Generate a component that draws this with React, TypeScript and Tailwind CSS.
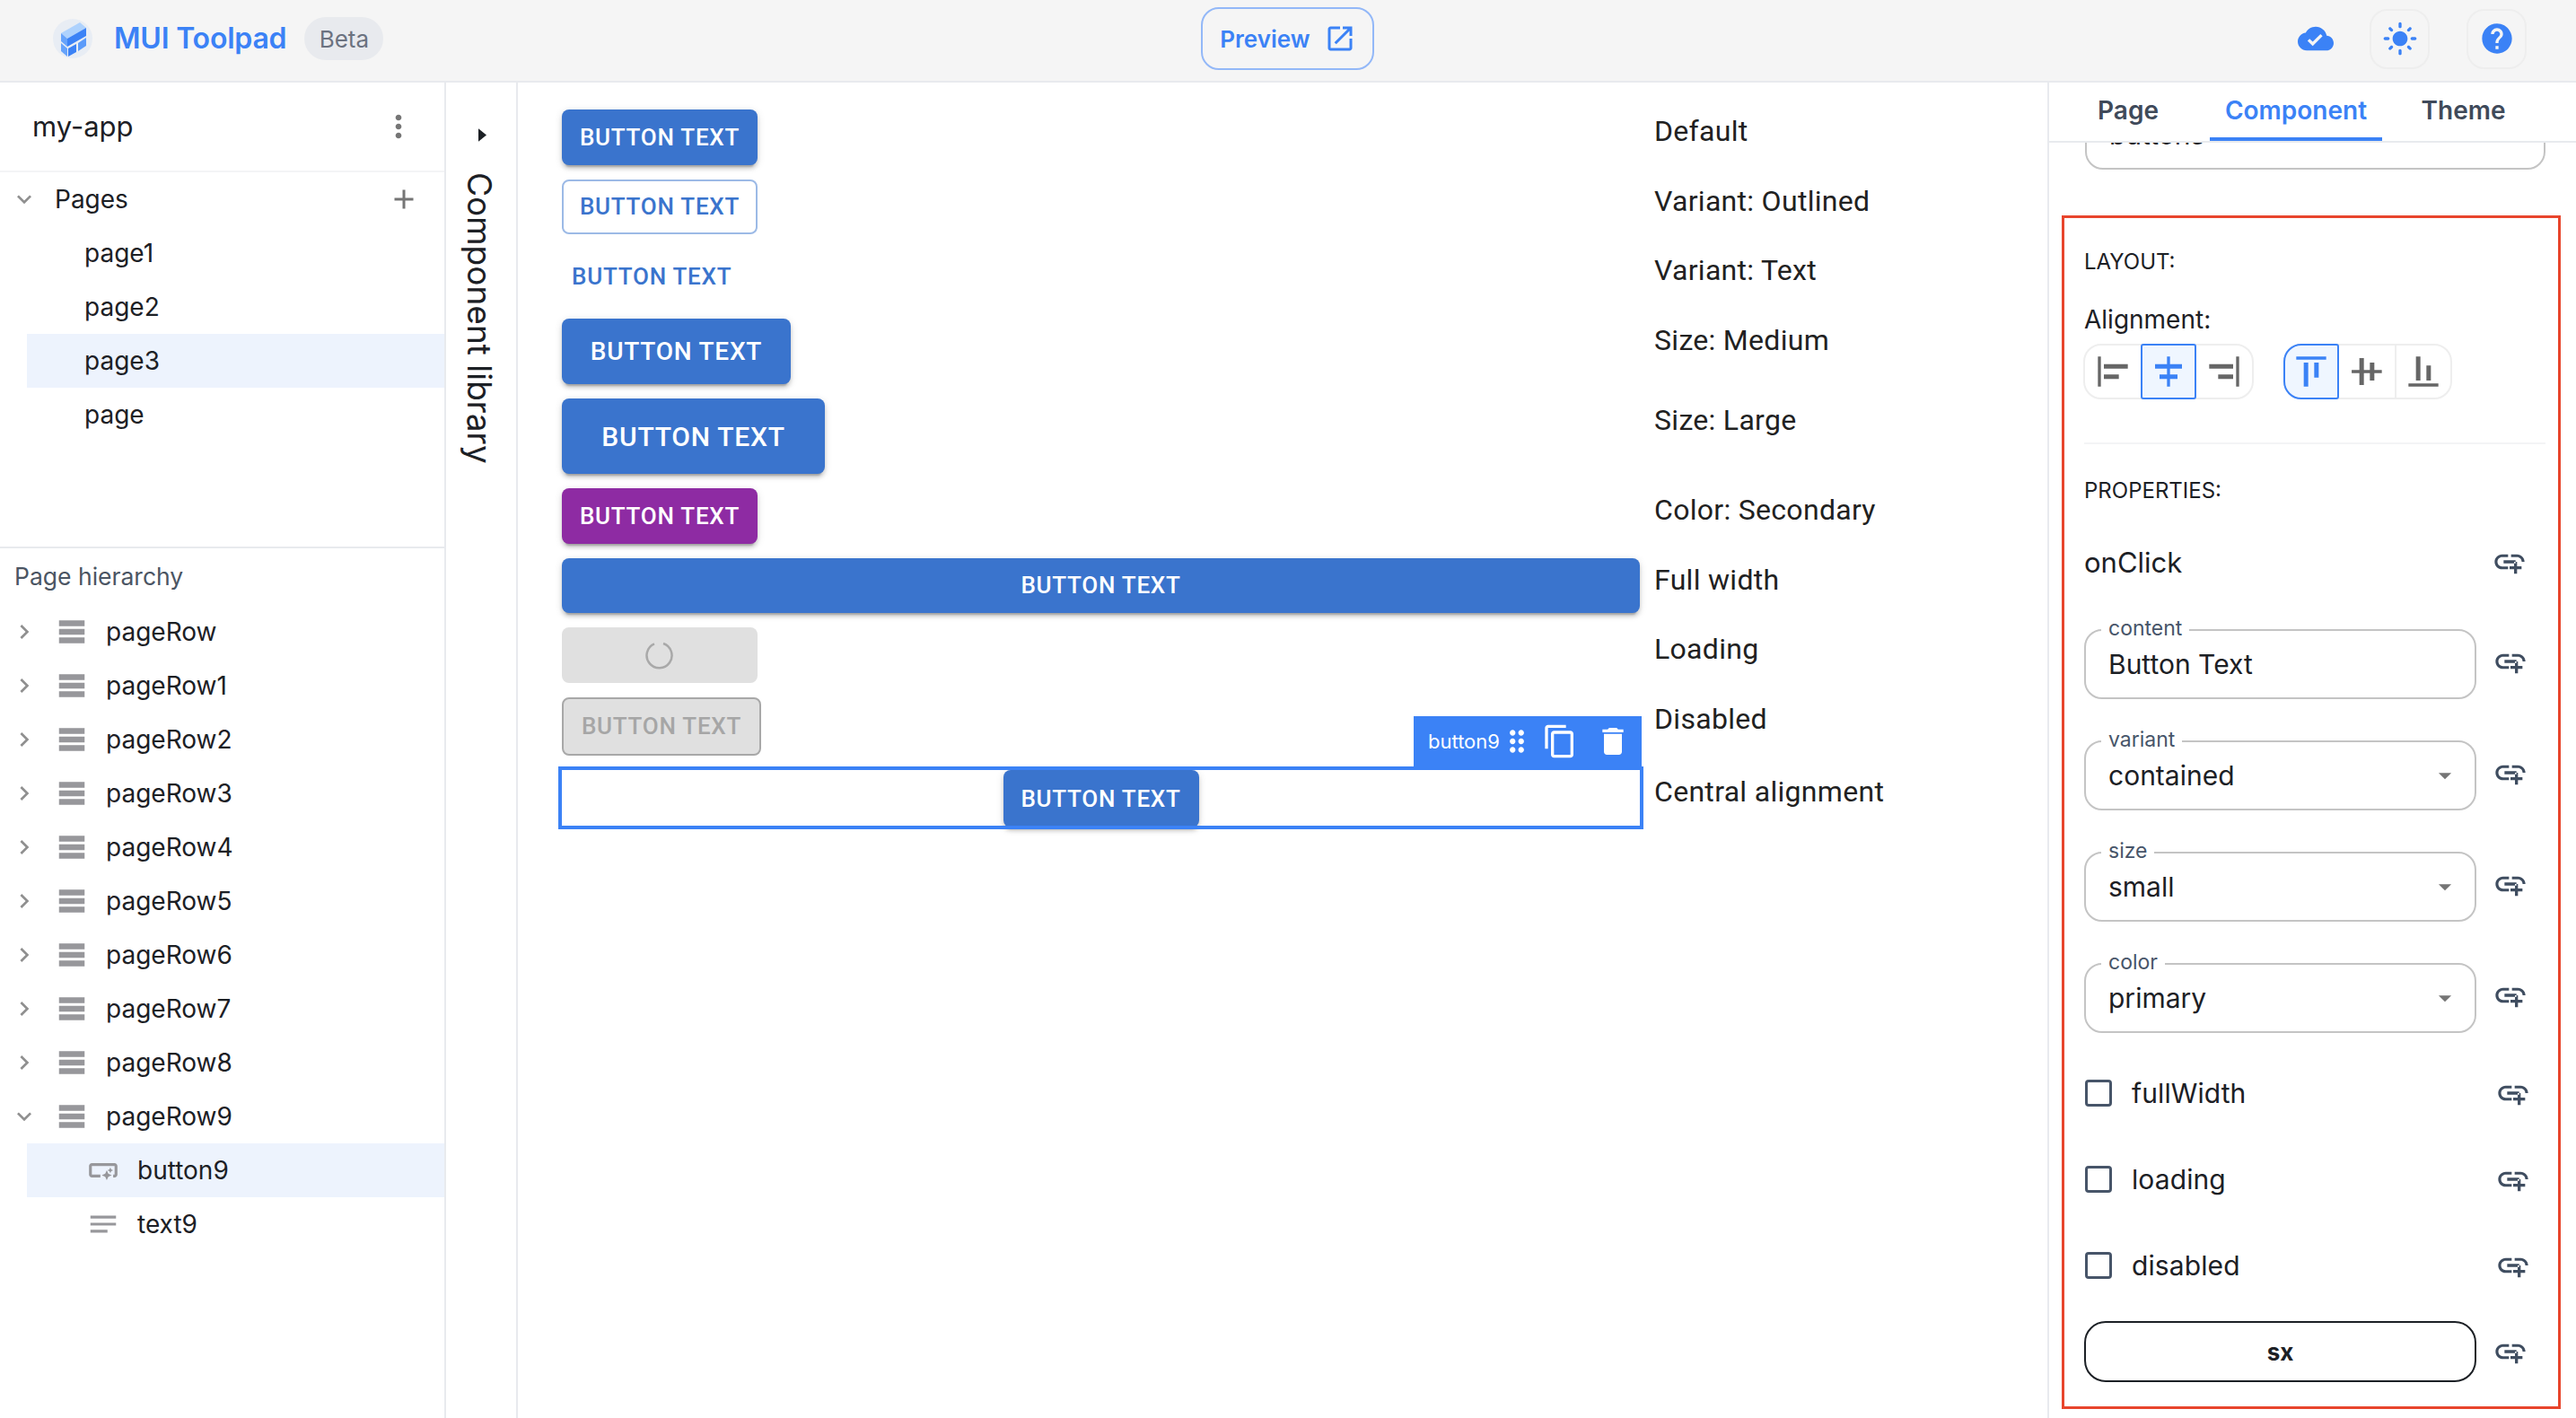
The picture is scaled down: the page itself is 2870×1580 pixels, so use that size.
import React from 'react';

const P = {
  copy: 'M16 1H4c-1.1 0-2 .9-2 2v14h2V3h12V1zm3 4H8c-1.1 0-2 .9-2 2v14c0 1.1.9 2 2 2h11c1.1 0 2-.9 2-2V7c0-1.1-.9-2-2-2zm0 16H8V7h11v14z',
  trash: 'M6 19c0 1.1.9 2 2 2h8c1.1 0 2-.9 2-2V7H6v12zM19 4h-3.5l-1-1h-5l-1 1H5v2h14V4z',
  drag: 'M11 18c0 1.1-.9 2-2 2s-2-.9-2-2 .9-2 2-2 2 .9 2 2zm-2-8c-1.1 0-2 .9-2 2s.9 2 2 2 2-.9 2-2-.9-2-2-2zm0-6c-1.1 0-2 .9-2 2s.9 2 2 2 2-.9 2-2-.9-2-2-2zm6 4c1.1 0 2-.9 2-2s-.9-2-2-2-2 .9-2 2 .9 2 2 2zm0 2c-1.1 0-2 .9-2 2s.9 2 2 2 2-.9 2-2-.9-2-2-2zm0 6c-1.1 0-2 .9-2 2s.9 2 2 2 2-.9 2-2-.9-2-2-2z',
  cloud: 'M19.35 10.04C18.67 6.59 15.64 4 12 4 9.11 4 6.6 5.64 5.35 8.04 2.34 8.36 0 10.91 0 14c0 3.31 2.69 6 6 6h13c2.76 0 5-2.24 5-5 0-2.64-2.05-4.78-4.65-4.96zM10 17l-3.5-3.5 1.41-1.41L10 14.17 15.18 9l1.41 1.41L10 17z',
  sun: 'M12 7c-2.76 0-5 2.24-5 5s2.24 5 5 5 5-2.24 5-5-2.24-5-5-5zM2 13h2c.55 0 1-.45 1-1s-.45-1-1-1H2c-.55 0-1 .45-1 1s.45 1 1 1zm18 0h2c.55 0 1-.45 1-1s-.45-1-1-1h-2c-.55 0-1 .45-1 1s.45 1 1 1zM11 2v2c0 .55.45 1 1 1s1-.45 1-1V2c0-.55-.45-1-1-1s-1 .45-1 1zm0 18v2c0 .55.45 1 1 1s1-.45 1-1v-2c0-.55-.45-1-1-1s-1 .45-1 1zM5.99 4.58c-.39-.39-1.03-.39-1.41 0-.39.39-.39 1.03 0 1.41l1.06 1.06c.39.39 1.03.39 1.41 0s.39-1.03 0-1.41L5.99 4.58zm12.37 12.37c-.39-.39-1.03-.39-1.41 0-.39.39-.39 1.03 0 1.41l1.06 1.06c.39.39 1.03.39 1.41 0 .39-.39.39-1.03 0-1.41l-1.06-1.06zm1.06-10.96c.39-.39.39-1.03 0-1.41-.39-.39-1.03-.39-1.41 0l-1.06 1.06c-.39.39-.39 1.03 0 1.41s1.03.39 1.41 0l1.06-1.06zM7.05 18.36c.39-.39.39-1.03 0-1.41-.39-.39-1.03-.39-1.41 0l-1.06 1.06c-.39.39-.39 1.03 0 1.41s1.03.39 1.41 0l1.06-1.06z',
  help: 'M12 2C6.48 2 2 6.48 2 12s4.48 10 10 10 10-4.48 10-10S17.52 2 12 2zm1 17h-2v-2h2v2zm2.07-7.75-.9.92C13.45 12.9 13 13.5 13 15h-2v-.5c0-1.1.45-2.1 1.17-2.83l1.24-1.26c.37-.36.59-.86.59-1.41 0-1.1-.9-2-2-2s-2 .9-2 2H8c0-2.21 1.79-4 4-4s4 1.79 4 4c0 .88-.36 1.68-.93 2.25z',
  open: 'M19 19H5V5h7V3H5c-1.11 0-2 .9-2 2v14c0 1.1.89 2 2 2h14c1.1 0 2-.9 2-2v-7h-2v7zM14 3v2h3.59l-9.83 9.83 1.41 1.41L19 6.41V10h2V3h-7z',
  addLink: 'M8 11h8v2H8zm12.1 1H22c0-2.76-2.24-5-5-5h-4v1.9h4c1.71 0 3.1 1.39 3.1 3.1zM3.9 12c0-1.71 1.39-3.1 3.1-3.1h4V7H7c-2.76 0-5 2.24-5 5s2.24 5 5 5h4v-1.9H7c-1.71 0-3.1-1.39-3.1-3.1zM17 12h-2v3h-3v2h3v3h2v-3h3v-2h-3z',
  rows: 'M21 8H3V4h18v4zm0 2H3v4h18v-4zm0 6H3v4h18v-4z',
  notes: 'M3 18h12v-2H3v2zM3 6v2h18V6H3zm0 7h18v-2H3v2z',
  smart: 'M22 9v6c0 1.1-.9 2-2 2h-1v-2h1V9H4v6h6v2H4c-1.1 0-2-.9-2-2V9c0-1.1.9-2 2-2h16c1.1 0 2 .9 2 2zm-7.5 10 1.09-2.41L18 15.5l-2.41-1.09L14.5 12l-1.09 2.41L11 15.5l2.41 1.09L14.5 19zm2.5-5 .62-1.38L19 12l-1.38-.62L17 10l-.62 1.38L15 12l1.38.62L17 14z',
  more: 'M12 8c1.1 0 2-.9 2-2s-.9-2-2-2-2 .9-2 2 .9 2 2 2zm0 2c-1.1 0-2 .9-2 2s.9 2 2 2 2-.9 2-2-.9-2-2-2zm0 6c-1.1 0-2 .9-2 2s.9 2 2 2 2-.9 2-2-.9-2-2-2z',
  add: 'M19 13h-6v6h-2v-6H5v-2h6V5h2v6h6v2z',
  down: 'M16.59 8.59 12 13.17 7.41 8.59 6 10l6 6 6-6z',
  right: 'M10 6 8.59 7.41 13.17 12l-4.58 4.59L10 18l6-6z',
  caret: 'M7 10l5 5 5-5z',
  alignL: 'M4 22H2V2h2v20zM22 7H6v3h16V7zm-6 7H6v3h10v-3z',
  alignC: 'M11 2h2v5h8v3h-8v4h5v3h-5v5h-2v-5H6v-3h5v-4H3V7h8V2z',
  alignR: 'M20 2h2v20h-2V2zM2 10h16V7H2v3zm6 7h10v-3H8v3z',
  alignT: 'M22 2v2H2V2h20zM7 22h3V6H7v16zm7-6h3V6h-3v10z',
  alignM: 'M22 11h-5V6h-3v5h-4V3H7v8H1.84v2H7v8h3v-8h4v5h3v-5h5v-2z',
  alignB: 'M22 22H2v-2h20v2zM10 2H7v16h3V2zm7 6h-3v10h3V8z',
};

const Icon = ({ d, className }: { d: string; className: string }) => (
  <svg viewBox="0 0 24 24" className={`shrink-0 fill-current ${className}`}>
    <path d={d} />
  </svg>
);

const Logo = () => (
  <svg viewBox="0 0 44 44" className="w-[44px] h-[44px]">
    <circle cx="22" cy="22" r="22" fill="#e8edf4" />
    <polygon points="9,16 30,4 37,10 16,22" fill="#aed2fd" />
    <polygon points="9,16 16,22 16,31 9,25" fill="#66a3fb" />
    <polygon points="16,22 37,10 37,19 16,31" fill="#3b82f6" />
    <polygon points="9,27 16,33 16,42 9,36" fill="#66a3fb" />
    <polygon points="17,33 26,28 26,37 17,42" fill="#3b82f6" />
    <polygon points="28,27 37,21 37,30 28,36" fill="#5b9bfa" />
  </svg>
);

const raised = 'shadow-[0_6px_2px_-4px_rgba(0,0,0,0.2),0_4px_4px_0_rgba(0,0,0,0.14),0_2px_10px_0_rgba(0,0,0,0.12)]';
const roboto = "font-['Roboto',sans-serif]";

const TreeRow = ({ label, open, child, selected, icon }: { label: string; open?: boolean; child?: boolean; selected?: boolean; icon: string }) => (
  <div className={`h-[60px] flex items-center ${child ? 'ml-[30px] pl-[66px]' : 'pl-[11px]'} ${selected ? 'bg-[#edf3fd]' : ''}`}>
    {!child && <Icon d={open ? P.down : P.right} className="w-[32px] h-[32px] text-[#8f8f8f] mr-[18px]" />}
    <Icon d={icon} className={`w-[38px] h-[38px] text-[#97979b] ${child ? 'mr-[19px]' : 'mr-[19px]'}`} />
    <span className="text-[28px] text-[#1c2025]">{label}</span>
  </div>
);

const PageRow = ({ label, selected }: { label: string; selected?: boolean }) => (
  <div className={`h-[60px] ml-[30px] pl-[64px] flex items-center text-[28px] text-[#1c2025] ${selected ? 'bg-[#edf3fd]' : ''}`}>{label}</div>
);

const LinkIcon = ({ className = '' }: { className?: string }) => <Icon d={P.addLink} className={`w-[40px] h-[40px] text-[#3f4d60] ${className}`} />;

const Field = ({ label, value, select }: { label: string; value: string; select?: boolean }) => (
  <div className="flex items-center gap-[18px]">
    <div className="relative w-[437px] h-[78px] border-2 border-[#c4c4c4] rounded-[20px] flex items-center justify-between pl-[25px] pr-[16px]">
      <span className="absolute -top-[18px] left-[17px] bg-white px-[8px] text-[23px] leading-[30px] text-[#475569]">{label}</span>
      <span className="text-[30px] text-[#1c2025]">{value}</span>
      {select && <Icon d={P.caret} className="w-[34px] h-[34px] text-[#757575]" />}
    </div>
    <LinkIcon className="-mt-[7px]" />
  </div>
);

const Check = ({ label }: { label: string }) => (
  <div className="h-[48px] flex items-center">
    <div className="w-[30px] h-[30px] border-[3px] border-[#475569] rounded-[4px] ml-px mr-[22px]" />
    <span className="text-[30px] tracking-[0.1px] text-[#1c2025] w-[405px]">{label}</span>
    <LinkIcon />
  </div>
);

const ToggleGroup = ({ items, selected, divider, roundedLeft }: { items: string[]; selected: number; divider?: boolean; roundedLeft?: boolean }) => (
  <div className="flex h-[62px] border-2 border-[#eeeeee] rounded-[20px]">
    {items.map((d, i) => (
      <div
        key={d}
        className={`w-[62px] -my-[2px] flex items-center justify-center
          ${i === selected ? 'bg-[#eff6ff] border-2 border-[#3b82f6] text-[#3b82f6]' : 'text-[#666666]'}
          ${i === selected ? (roundedLeft ? '-ml-[2px] rounded-l-[20px] rounded-r-[3px]' : 'rounded-[3px]') : ''}
          ${divider && i === 2 ? 'border-l-2 border-[#eeeeee]' : ''}`}
      >
        <Icon d={d} className="w-[40px] h-[40px]" />
      </div>
    ))}
  </div>
);

const CanvasButton = ({ className, children }: { className: string; children: React.ReactNode }) => (
  <div className={`flex items-center justify-center rounded-[8px] font-medium tracking-[0.75px] ${roboto} ${className}`}>{children}</div>
);

const solid = `bg-[#3a74cd] text-white ${raised}`;
const small = 'w-[218px] h-[62px] text-[26px]';

const rows: { label: string; el: React.ReactNode; selected?: boolean }[] = [
  { label: 'Default', el: <CanvasButton className={`${small} ${solid}`}>BUTTON TEXT</CanvasButton> },
  { label: 'Variant: Outlined', el: <CanvasButton className="w-[218px] h-[61px] text-[26px] border-2 border-[#9cbae6] text-[#3a74cd]">BUTTON TEXT</CanvasButton> },
  { label: 'Variant: Text', el: <CanvasButton className={`${small} !justify-start pl-[11px] text-[#3a74cd]`}>BUTTON TEXT</CanvasButton> },
  { label: 'Size: Medium', el: <CanvasButton className={`w-[255px] h-[73px] text-[28px] ${solid}`}>BUTTON TEXT</CanvasButton> },
  { label: 'Size: Large', el: <CanvasButton className={`w-[293px] h-[84px] text-[30px] ${solid}`}>BUTTON TEXT</CanvasButton> },
  { label: 'Color: Secondary', el: <CanvasButton className={`${small} bg-[#8e2ba3] text-white ${raised}`}>BUTTON TEXT</CanvasButton> },
  { label: 'Full width', el: <CanvasButton className={`w-full h-[61px] text-[26px] ${solid}`}>BUTTON TEXT</CanvasButton> },
  {
    label: 'Loading',
    el: (
      <CanvasButton className={`${small} bg-[#e0e0e0]`}>
        <svg viewBox="0 0 32 32" className="w-[32px] h-[32px]">
          <path d="M20 3 A14 14 0 1 1 10 3.4" fill="none" stroke="#a9a9a9" strokeWidth="2.5" />
        </svg>
      </CanvasButton>
    ),
  },
  { label: 'Disabled', el: <CanvasButton className="w-[222px] h-[65px] text-[26px] bg-[#e0e0e0] border-2 border-[#a8a8a8] text-[#a6a6a6]">BUTTON TEXT</CanvasButton> },
  { label: 'Central alignment', el: <CanvasButton className={`mx-auto w-[218px] h-[64px] text-[26px] ${solid}`}>BUTTON TEXT</CanvasButton>, selected: true },
];

const App: React.FC = () => {
  return (
    <div className="w-screen h-screen overflow-hidden bg-white flex flex-col font-['Inter',sans-serif]">
      {/* top bar */}
      <header className="h-[92px] shrink-0 grid grid-cols-3 items-center bg-[#f5f5f5] border-b-2 border-[#e8eaee] pb-[4px]">
        <div className="flex items-center pl-[59px]">
          <Logo />
          <span className="ml-[24px] text-[32px] font-semibold text-[#3b82f6] -tracking-[0.2px]">MUI Toolpad</span>
          <span className="ml-[20px] w-[88px] h-[48px] rounded-full bg-[#e8eaee] flex items-center justify-center text-[26px] text-[#6b7280]">Beta</span>
        </div>
        <div className="flex justify-center">
          <div className="w-[193px] h-[70px] flex items-center justify-center gap-[15px] border-2 border-[#93b8f8] rounded-[20px] text-[26px] font-semibold text-[#3b82f6]">
            Preview
            <Icon d={P.open} className="w-[36px] h-[36px]" />
          </div>
        </div>
        <div className="flex items-center justify-end pr-[55px] text-[#3b82f6]">
          <Icon d={P.cloud} className="w-[40px] h-[40px] mr-[40px]" />
          <div className="w-[67px] h-[67px] border-2 border-[#eeeeee] rounded-[20px] flex items-center justify-center mr-[41px]">
            <Icon d={P.sun} className="w-[40px] h-[40px]" />
          </div>
          <div className="w-[67px] h-[67px] border-2 border-[#eeeeee] rounded-[20px] flex items-center justify-center">
            <Icon d={P.help} className="w-[40px] h-[40px]" />
          </div>
        </div>
      </header>

      <div className="flex-1 flex min-h-0">
        {/* left sidebar */}
        <aside className="w-[497px] shrink-0 border-r-2 border-[#e8eaee] flex flex-col">
          <div className="h-[519px] shrink-0 border-b-2 border-[#e8eaee]">
            <div className="h-[100px] border-b-2 border-[#f3f4f6] flex items-center justify-between pl-[36px] pr-[31px]">
              <span className="text-[31px] text-[#1c2025]">my-app</span>
              <Icon d={P.more} className="w-[40px] h-[40px] text-[#757575]" />
            </div>
            <div className="h-[60px] flex items-center pl-[11px] pr-[27px]">
              <Icon d={P.down} className="w-[32px] h-[32px] text-[#8f8f8f] mr-[18px]" />
              <span className="flex-1 text-[28px] text-[#1c2025]">Pages</span>
              <Icon d={P.add} className="w-[36px] h-[36px] text-[#757575]" />
            </div>
            <PageRow label="page1" />
            <PageRow label="page2" />
            <PageRow label="page3" selected />
            <PageRow label="page" />
          </div>
          <div className="h-[63px] flex items-center pl-[16px] text-[26.5px] text-[#4b5563]">Page hierarchy</div>
          {['pageRow', 'pageRow1', 'pageRow2', 'pageRow3', 'pageRow4', 'pageRow5', 'pageRow6', 'pageRow7', 'pageRow8'].map((r) => (
            <TreeRow key={r} label={r} icon={P.rows} />
          ))}
          <TreeRow label="pageRow9" icon={P.rows} open />
          <TreeRow label="button9" icon={P.smart} child selected />
          <TreeRow label="text9" icon={P.notes} child />
        </aside>

        {/* component library rail */}
        <div className="w-[80px] shrink-0 border-r-2 border-[#e8eaee] flex flex-col items-center pt-[51px] pl-[1px]">
          <svg viewBox="0 0 10 16" className="w-[9px] h-[15px] fill-[#1c2025] ml-[1px]">
            <path d="M0 0l10 8-10 8z" />
          </svg>
          <span className="mt-[34px] text-[37px] leading-[44px] text-[#1c2025] [writing-mode:vertical-rl] whitespace-nowrap -ml-[6px]">Component library</span>
        </div>

        {/* canvas */}
        <main className="flex-1 min-w-0 pt-[30px] pl-[49px] flex flex-col gap-[16px]">
          {rows.map((r) => (
            <div key={r.label} className="grid grid-cols-[1201px_1fr] gap-[16px] items-start">
              <div className="relative">
                {r.el}
                {r.selected && (
                  <>
                    <div className="absolute -left-[4px] -right-[4px] -top-[4px] bottom-[-2px] border-[4px] border-[#3b82f6] pointer-events-none" />
                    <div className="absolute right-[-2px] -top-[60px] w-[254px] h-[56px] bg-[#3b82f6] text-white flex items-center pl-[16px]">
                      <span className="text-[22px]">button9</span>
                      <Icon d={P.drag} className="w-[38px] h-[38px]" />
                      <Icon d={P.copy} className="w-[40px] h-[40px] ml-[9px]" />
                      <Icon d={P.trash} className="w-[40px] h-[40px] ml-[19px]" />
                    </div>
                  </>
                )}
              </div>
              <span className={`text-[32px] leading-[48px] tracking-[0.3px] text-[#212121] ${roboto}`}>{r.label}</span>
            </div>
          ))}
        </main>

        {/* inspector */}
        <aside className="w-[589px] shrink-0 border-l-2 border-[#e8eaee] flex flex-col">
          <div className="h-[67px] shrink-0 border-b-2 border-[#e8eaee] flex pl-[38px] text-[28px] font-semibold text-[#3f4a5a]">
            <div className="w-[100px] h-[65px] flex items-center justify-center border-b-4 border-transparent">Page</div>
            <div className="ml-[41px] w-[192px] h-[65px] flex items-center justify-center border-b-4 border-[#3b82f6] text-[#3b82f6]">Component</div>
            <div className="ml-[27px] w-[127px] h-[65px] flex items-center justify-center border-b-4 border-transparent">Theme</div>
          </div>
          <div className="flex-1 min-h-0 overflow-hidden">
            <div className="ml-[40px] w-[513px] h-[78px] -mt-[48px] border-2 border-[#c4c4c4] rounded-[20px] flex items-center pl-[25px] text-[30px] text-[#1c2025]">buttons</div>
            <div className="mt-[51px] ml-[14px] w-[556px] h-[1330px] border-[3px] border-[#e8452c] pt-[29px] pl-[22px] pr-[14px] text-[#1c2025]">
              <div className="h-[40px] flex items-center text-[24px]">LAYOUT:</div>
              <div className="mt-[24px] h-[40px] flex items-center text-[28px]">Alignment:</div>
              <div className="mt-[7px] flex gap-[33px] -ml-[1px]">
                <ToggleGroup items={[P.alignL, P.alignC, P.alignR]} selected={1} />
                <ToggleGroup items={[P.alignT, P.alignM, P.alignB]} selected={0} divider roundedLeft />
              </div>
              <div className="mt-[48px] h-[2px] bg-[#f3f4f6]" />
              <div className="mt-[32px] h-[40px] flex items-center text-[24px]">PROPERTIES:</div>
              <div className="mt-[36px] h-[48px] flex items-center justify-between pr-[20px]">
                <span className="text-[31px]">onClick</span>
                <LinkIcon className="-mt-[2px]" />
              </div>
              <div className="mt-[50px] flex flex-col gap-[46px]">
                <Field label="content" value="Button Text" />
                <Field label="variant" value="contained" select />
                <Field label="size" value="small" select />
                <Field label="color" value="primary" select />
              </div>
              <div className="mt-[43px] flex flex-col gap-[48px]">
                <Check label="fullWidth" />
                <Check label="loading" />
                <Check label="disabled" />
              </div>
              <div className="mt-[38px] flex items-center gap-[18px]">
                <div className="w-[437px] h-[68px] border-2 border-[#1c2025] rounded-[24px] flex items-center justify-center text-[26px] font-bold">sx</div>
                <LinkIcon />
              </div>
            </div>
          </div>
        </aside>
      </div>
    </div>
  );
};

export default App;
